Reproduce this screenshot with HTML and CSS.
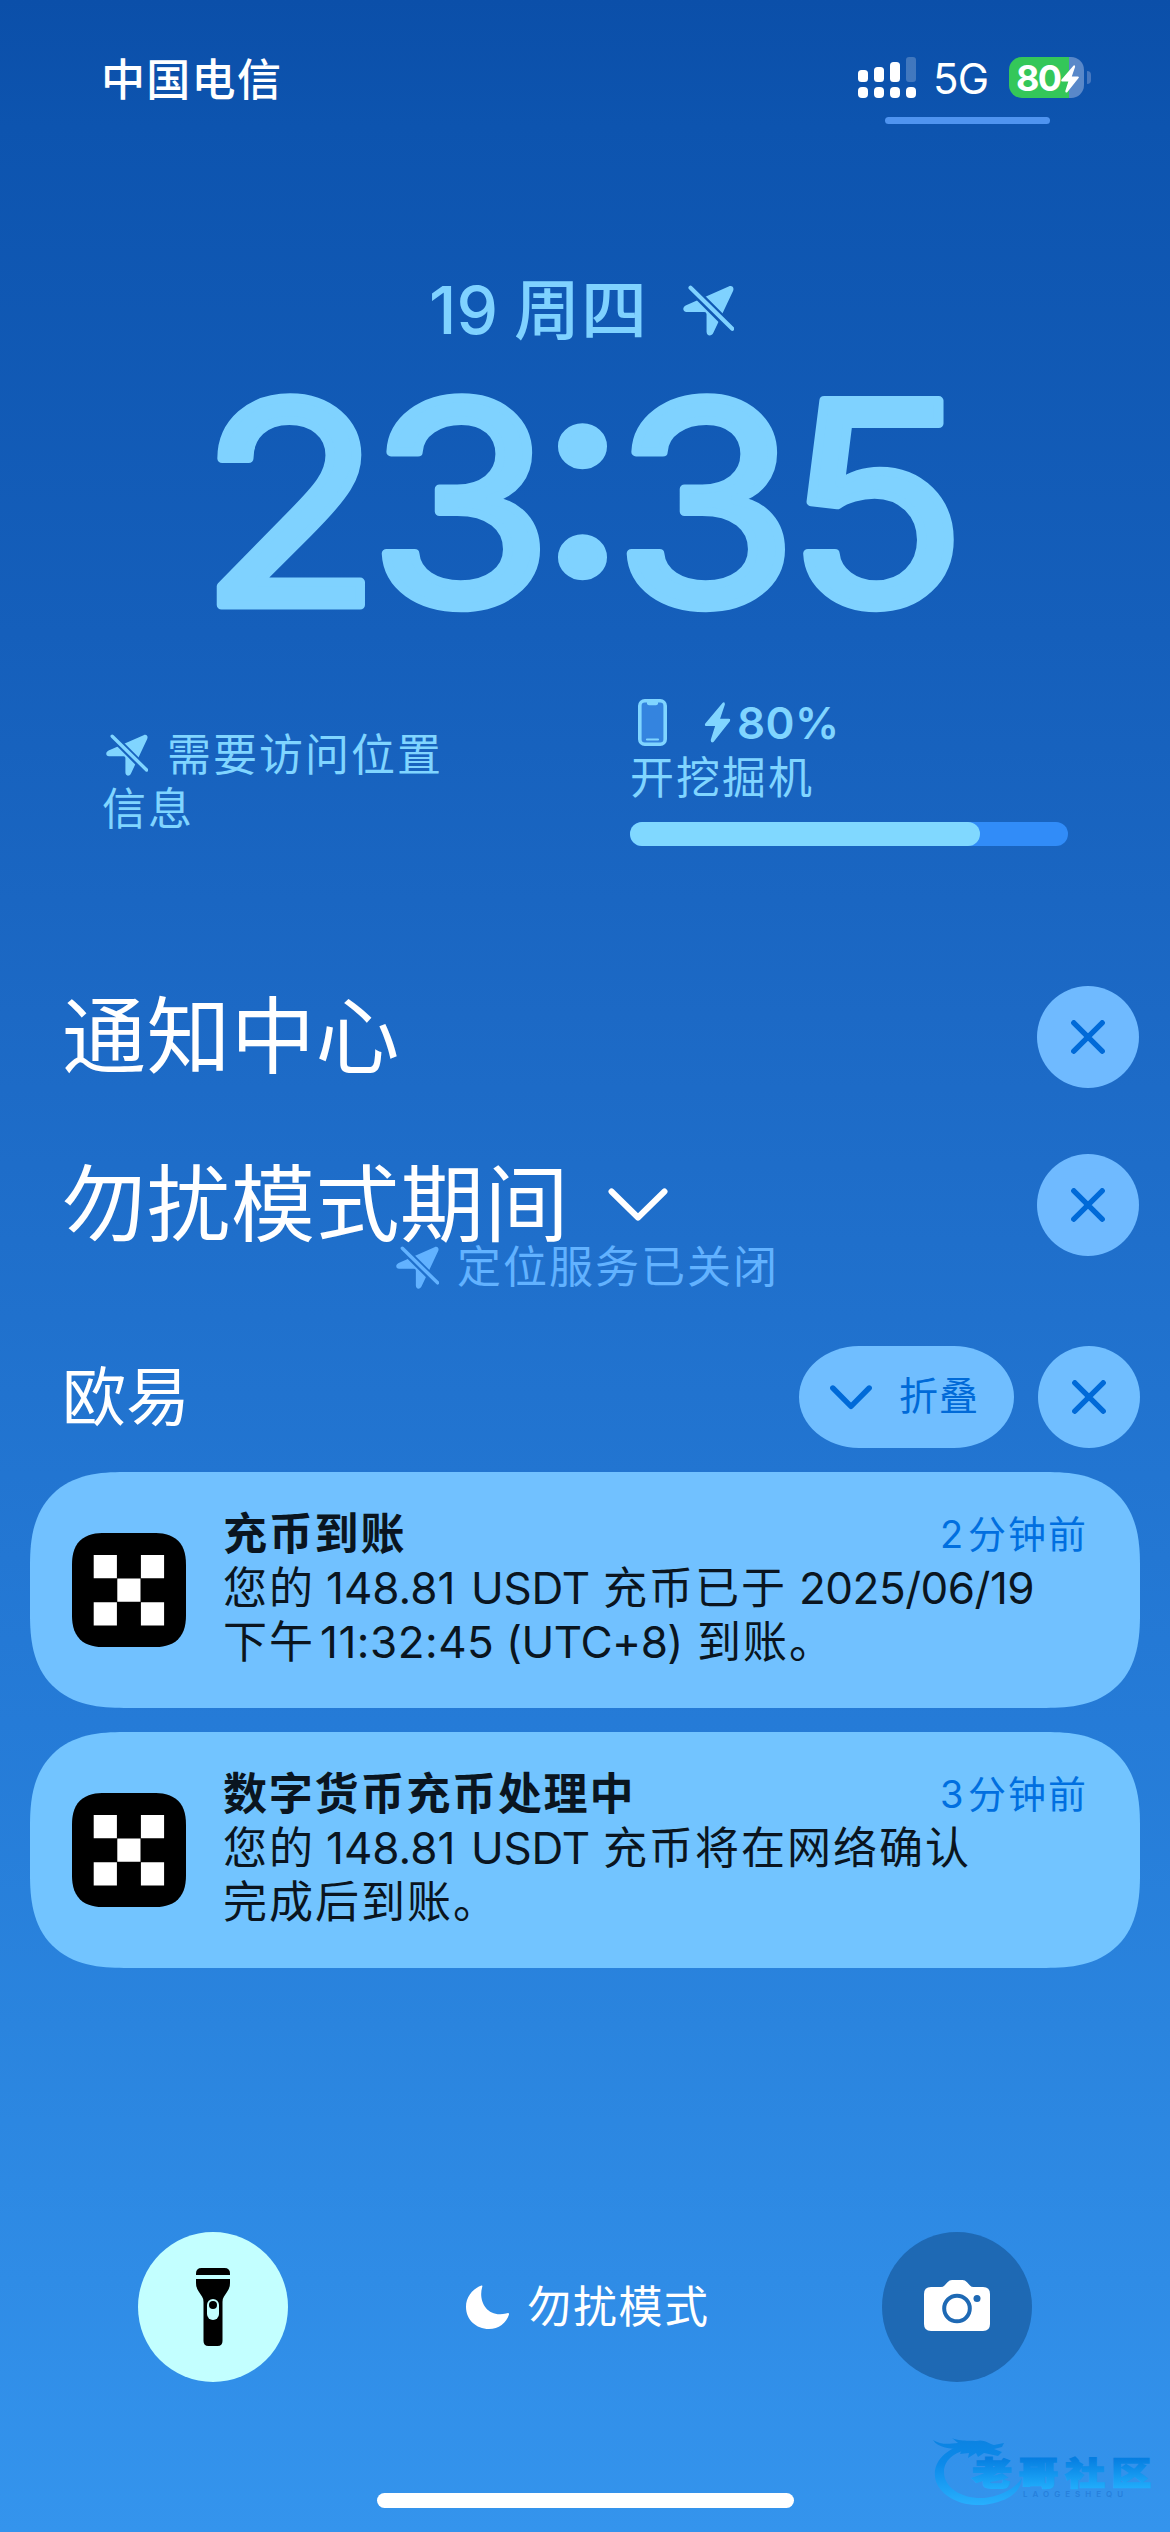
FILE: index.html
```html
<!DOCTYPE html>
<html lang="zh-CN">
<head>
<meta charset="utf-8">
<title>锁定屏幕</title>
<link rel="stylesheet" href="styles.css">
</head>
<body>
<svg class="defs" width="0" height="0">
  <defs>
    <mask id="slash-gap" maskUnits="userSpaceOnUse" x="0" y="0" width="42" height="42">
      <rect width="42" height="42" fill="#fff"/>
      <path d="M3 -1 L45 41" stroke="#000" stroke-width="7.4"/>
    </mask>
    <symbol id="location-slash" viewBox="0 0 42 42">
      <path mask="url(#slash-gap)" fill="currentColor" d="M37.6 1.2 L2.6 16.6 C-.8 18.2 -.4 22.2 3 22.2 H17.6 Q19.4 22.2 19.4 24 V38.6 C19.4 42.4 23.6 42.6 25 39.4 L41.2 5 C42.4 2 40.4 0 37.6 1.2Z"/>
      <path d="M6.2 2.2 L40.6 36" stroke="currentColor" stroke-width="3.4" stroke-linecap="round"/>
    </symbol>
    <symbol id="bolt" viewBox="0 0 26 41">
      <path fill="currentColor" d="M18.2 .8 L.8 21.4 Q-.6 24 1.8 24 H10.6 L6.2 38 Q6.2 41.4 9 40 L25.4 19.2 Q26.6 16.8 24.2 16.8 H15.6 L20.4 2.6 Q20.4 -.6 18.2 .8Z"/>
    </symbol>
    <symbol id="close" viewBox="0 0 34 34">
      <path d="M2.8 2.8 L31.2 31.2 M31.2 2.8 L2.8 31.2" stroke="currentColor" stroke-width="5.4" stroke-linecap="round"/>
    </symbol>
    <symbol id="okx" viewBox="0 0 114 114">
      <rect width="114" height="114" fill="#000"/>
      <path fill="#fff" d="M21.7 22h23.2v23.2h-23.2zM68.9 22h23.2v23.2h-23.2zM45.3 45.6h23.2v23.2h-23.2zM21.7 69.2h23.2v23.2h-23.2zM68.9 69.2h23.2v23.2h-23.2z"/>
    </symbol>
  </defs>
</svg>

<main class="screen">
  <header class="status">
    <span class="carrier">中国电信</span>
    <div class="status-right">
      <svg class="signal" width="58" height="41" viewBox="0 0 58 41" fill="#fff">
        <rect x="0" y="13" width="10" height="12" rx="3.5"/><rect x="16" y="10" width="10" height="15" rx="3.5"/>
        <rect x="32" y="5" width="10" height="20" rx="3.5"/><rect x="48" y="0" width="10" height="25" rx="3" opacity=".22"/>
        <rect x="0" y="30" width="10" height="11" rx="4"/><rect x="16" y="30" width="10" height="11" rx="4"/>
        <rect x="32" y="30" width="10" height="11" rx="4"/><rect x="48" y="30" width="10" height="11" rx="4"/>
      </svg>
      <span class="network">5G</span>
      <div class="battery"><span>80</span><svg class="battery-bolt" width="18" height="28" viewBox="0 0 26 41" preserveAspectRatio="none"><use href="#bolt"/></svg></div>
      <i class="battery-cap"></i>
    </div>
  </header>
  <div class="indicator"></div>

  <section class="date">
    <span class="date-day">19</span><span class="date-week">周四</span>
    <svg width="51" height="51"><use href="#location-slash"/></svg>
  </section>
  <svg class="clock" width="780" height="240" viewBox="0 0 780 240">
    <text transform="scale(1.065 1)" x="-2.800 156.100 316.800 386.100 547.300" y="221 221 190 221 221">23:35</text>
  </svg>

  <section class="widgets">
    <div class="widget-location">
      <svg width="42" height="42"><use href="#location-slash"/></svg>需要访问位置<br>信息
    </div>
    <div class="widget-battery">
      <div class="device">
        <svg class="phone" width="29" height="47" viewBox="0 0 29 47">
          <rect x="1.8" y="1.8" width="25.4" height="43.4" rx="5" fill="#3484df" stroke="#80d5ff" stroke-width="3.6"/>
          <path d="M9 2h11v2.2q0 2-2 2h-7q-2 0-2-2z" fill="#80d5ff"/>
          <path d="M9 40.5h11" stroke="#80d5ff" stroke-width="2.2" stroke-linecap="round"/>
        </svg>
        <svg class="device-bolt" width="27" height="41" viewBox="0 0 26 41"><use href="#bolt"/></svg>
        <span class="percent">80%</span>
      </div>
      <div class="device-name">开挖掘机</div>
      <div class="meter"><div class="meter-fill" style="width:80%"></div></div>
    </div>
  </section>

  <section class="group-row">
    <h1>通知中心</h1>
    <button class="round"><svg width="34" height="34"><use href="#close"/></svg></button>
  </section>
  <section class="group-row second">
    <h1>勿扰模式期间</h1>
    <svg class="chevron" width="60" height="34" viewBox="0 0 60 34"><path d="M3.5 3.5 L30 29.5 L56.5 3.5" fill="none" stroke="#fff" stroke-width="6" stroke-linecap="round" stroke-linejoin="round"/></svg>
    <button class="round"><svg width="34" height="34"><use href="#close"/></svg></button>
    <div class="ghost"><svg width="43" height="43"><use href="#location-slash"/></svg><span>定位服务已关闭</span></div>
  </section>
  <section class="group-row app">
    <h2>欧易</h2>
    <button class="collapse">
      <svg width="42" height="25" viewBox="0 0 42 25"><path d="M2.8 3 L21 21.4 L39.2 3" fill="none" stroke="currentColor" stroke-width="5.4" stroke-linecap="round" stroke-linejoin="round"/></svg>
      <span>折叠</span>
    </button>
    <button class="round"><svg width="34" height="34"><use href="#close"/></svg></button>
  </section>

  <section class="cards">
    <article class="card">
      <svg class="app-icon" width="114" height="114"><use href="#okx"/></svg>
      <div class="card-body">
        <div class="card-head"><h3>充币到账</h3><time><span>2</span>分钟前</time></div>
        <p>您的<span class="seg amount">148.81</span><span class="seg unit">USDT</span><span class="seg">充币已于</span><span class="seg day">2025/06/19</span></p>
        <p>下午<span class="seg hour">11:32:45</span><span class="seg zone">(UTC+8)</span><span class="seg">到账。</span></p>
      </div>
    </article>
    <article class="card">
      <svg class="app-icon" width="114" height="114"><use href="#okx"/></svg>
      <div class="card-body">
        <div class="card-head"><h3>数字货币充币处理中</h3><time><span>3</span>分钟前</time></div>
        <p>您的<span class="seg amount">148.81</span><span class="seg unit">USDT</span><span class="seg">充币将在网络确认</span></p>
        <p>完成后到账。</p>
      </div>
    </article>
  </section>

  <footer class="dock">
    <div class="dock-button torch">
      <svg width="34" height="78" viewBox="0 0 34 78">
        <path d="M0 7V5.5Q0 0 5.5 0h23Q34 0 34 5.5V7z"/>
        <path d="M0 11H34V15Q34 20 31 24 L28 28.500Q26.500 30.500 26.500 34V73Q26.500 78 21.500 78h-9Q7.500 78 7.500 73V34Q7.500 30.500 6 28.500L3 24Q0 20 0 15z"/>
        <rect x="11" y="31" width="12" height="21" rx="6" fill="#c3ffff"/><circle cx="17" cy="37" r="4"/>
      </svg>
    </div>
    <div class="focus">
      <svg width="44" height="44" viewBox="0 0 44 44"><path fill="#fff" d="M15.500 .6Q16.800 0 16.200 2C12 16 21 33 40 28.500Q43.500 27.200 43 29.500C40.500 38 32.500 44 23 44C10 44 0 34.500 0 22C0 12.500 6 4 15.500 .6Z"/></svg>
      <span>勿扰模式</span>
    </div>
    <div class="dock-button camera">
      <svg width="66" height="51" viewBox="0 0 66 51">
        <path fill="#fff" d="M7 7H17Q19 7 20.500 5.400L23.500 2.200Q25.500 0 28 0H38.500Q41 0 43 2.200L46 5.400Q47.500 7 49.500 7H59Q66 7 66 14V44Q66 51 59 51H7Q0 51 0 44V14Q0 7 7 7Z"/>
        <circle cx="33" cy="28.500" r="12.800" fill="none" stroke="#1e69b4" stroke-width="4"/><circle cx="53" cy="18.600" r="3.500" fill="#1e69b4"/>
      </svg>
    </div>
  </footer>
  <div class="home-bar"></div>

  <svg class="community" width="224" height="74" viewBox="0 0 224 74">
    <defs><linearGradient id="wave" gradientUnits="userSpaceOnUse" x1="0" y1="4" x2="0" y2="72"><stop offset="0" stop-color="#0b83e2"/><stop offset=".35" stop-color="#0c8aea"/><stop offset="1" stop-color="#2ab2ff"/></linearGradient>
    <linearGradient id="ink" gradientUnits="userSpaceOnUse" x1="0" y1="-27" x2="0" y2="3"><stop offset="0" stop-color="#057de0"/><stop offset="1" stop-color="#20acfb"/></linearGradient></defs>
    <path fill="url(#wave)" d="M34 8C8 14 -2 32 5 48C14 66 42 74 66 66C80 62 88 55 90 42C82 54 68 60 52 62C30 63 12 52 12 36C12 24 22 16 38 13Z"/>
    <path fill="url(#wave)" d="M1 4C9 9 16 8 26 7L20 2C30 6 36 4 44 5C52 3 56 7 62 9L72 7L70 11L62 13L70 16L66 20L52 17L46 21L44 17L36 22L37 17L28 18L30 13C18 13 6 12 1 4Z"/>
    <text class="community-name" transform="translate(40 49) scale(1.25 1)" x="0 37 74.500 111.500" y="0" fill="url(#ink)">老哥社区</text>
    <text class="community-sub" x="91" y="61">LAOGESHEQU</text>
  </svg>
</main>
</body>
</html>
```
FILE: styles.css
```css
* { box-sizing: border-box; }
body { margin: 0; }
h1, h2, h3, p { margin: 0; font-weight: 400; }
svg { display: block; flex: none; }
button { border: 0; padding: 0; font: inherit; }
.defs { position: absolute; }

.screen {
  position: relative;
  width: 1170px;
  height: 2532px;
  overflow: hidden;
  display: flex;
  flex-direction: column;
  color: #fff;
  font-family: Inter, "Noto Sans CJK SC", sans-serif;
  background: linear-gradient(180deg, #0b4fa9 0%, #0d54af 5%, #155fbb 25%, #1c69c5 40%, #2173cf 55%, #257bd7 68%, #2a84de 80%, #2f8ce6 90%, #3494ed 100%);
}

/* status bar */
.status { display: flex; align-items: flex-start; justify-content: space-between; height: 117px; padding: 57px 79px 0 101px; }
.carrier { font-size: 44px; line-height: 46px; letter-spacing: 1.300px; font-weight: 500; }
.status-right { display: flex; align-items: flex-start; }
.network { width: 76px; margin-left: 17px; font-size: 42px; line-height: 44px; letter-spacing: -.800px; }
.battery { position: relative; display: flex; width: 75px; height: 41px; padding-left: 7px; border-radius: 13px; background: linear-gradient(90deg, #34c759 60px, #5988c9 60px); font-size: 36px; line-height: 43px; font-weight: 700; letter-spacing: -1.800px; }
.battery-bolt { position: absolute; left: 52px; top: 8px; }
.battery-cap { width: 4px; height: 13px; margin: 14px 0 0 3px; border-radius: 0 4px 4px 0; background: #4678c0; }
.indicator { width: 165px; height: 7px; margin-left: 885px; border-radius: 4px; background: #4f94f0; }

/* date and clock */
.date { display: flex; align-items: center; height: 80px; margin: 146px 0 0 429px; color: #7fd2ff; font-size: 66px; line-height: 80px; font-weight: 500; }
.date-day { width: 85px; }
.date-week { width: 169px; letter-spacing: 1px; }
.clock { margin: 34px 0 0 202px; overflow: visible; }
.clock text { font-size: 281px; font-weight: 400; fill: #7fd2ff; stroke: #7fd2ff; stroke-width: 9px; stroke-linejoin: round; }

/* widgets */
.widgets { display: flex; justify-content: space-between; height: 166px; margin-top: 66px; padding: 0 102px; color: #80d5ff; font-size: 44px; letter-spacing: 2px; }
.widget-location { padding-top: 38px; line-height: 54px; }
.widget-location svg { display: inline-block; margin: 0 19px 0 4px; vertical-align: -5px; }
.widget-battery { width: 438px; padding-top: 9px; }
.device { display: flex; align-items: center; height: 47px; padding-left: 8px; }
.device-bolt { margin-left: 37px; }
.percent { margin-left: 6px; font-size: 44px; font-weight: 600; letter-spacing: .400px; }
.device-name { height: 54px; margin: 5px 0 17px; line-height: 54px; }
.meter { height: 24px; border-radius: 12px; background: #318cf8; }
.meter-fill { height: 24px; border-radius: 12px; background: #80d8ff; }

/* group headings */
.group-row { position: relative; display: flex; align-items: center; height: 102px; margin-top: 130px; padding: 0 31px 0 62px; }
.group-row.second { margin-top: 66px; }
.group-row.app { margin-top: 90px; padding-right: 30px; }
h1 { font-size: 84px; line-height: 104px; letter-spacing: .500px; }
h2 { font-size: 64px; line-height: 102px; }
.chevron { margin-left: 39px; }
.round, .collapse { display: flex; align-items: center; height: 102px; color: #006ad8; background: #6fbaff; }
.round { justify-content: center; width: 102px; margin-left: auto; border-radius: 51px; }
.app .round { margin-left: 24px; background: #70beff; }
.collapse { width: 215px; margin-left: auto; padding-left: 31px; gap: 27px; border-radius: 60px / 51px; background: #70beff; font-size: 39px; letter-spacing: 1px; }
.collapse span { line-height: 50px; margin-bottom: 2px; }
.ghost { position: absolute; left: 396px; top: 86px; display: flex; align-items: center; gap: 18px; color: #62b2ff; font-size: 44px; line-height: 54px; letter-spacing: 2px; }

/* notifications */
.cards { display: flex; flex-direction: column; gap: 24px; margin-top: 24px; padding: 0 30px; }
.card { display: flex; align-items: center; height: 236px; padding: 0 52px 0 42px; border-radius: 76px; background: #71c1ff; color: #0a1520; }
.card + .card { background: #72c4ff; }
.app-icon { border-radius: 27px; }
@supports (corner-shape: superellipse(1.3)) {
  .card { border-radius: 94px; corner-shape: superellipse(1.35); }
  .app-icon { border-radius: 33px; corner-shape: superellipse(1.35); }
}
.card-body { flex: 1; margin-left: 37px; padding-bottom: 5px; font-size: 44px; line-height: 54px; letter-spacing: 2px; }
.card-head { display: flex; justify-content: space-between; }
h3 { font-size: 44px; font-weight: 700; letter-spacing: 1.800px; }
time { display: flex; color: #006fe0; font-size: 38px; letter-spacing: 2px; }
time span { width: 28px; }
p { display: flex; white-space: nowrap; }
.seg { display: block; }
.amount { width: 145px; margin-left: 11px; letter-spacing: 0; }
.unit { width: 132px; letter-spacing: -.200px; }
.day { margin-left: 12px; letter-spacing: -.500px; }
.hour { width: 186px; margin-left: 5px; letter-spacing: .500px; }
.zone { width: 191px; letter-spacing: -.500px; }

/* bottom controls */
.dock { display: flex; justify-content: space-between; align-items: center; height: 150px; margin-top: 264px; padding: 0 138px; }
.dock-button { display: flex; align-items: center; justify-content: center; width: 150px; height: 150px; border-radius: 50%; }
.torch { background: #c3ffff; }
.camera { background: #1e69b4; }
.camera svg { margin-bottom: 3px; }
.focus { display: flex; align-items: center; gap: 17px; padding-left: 6px; font-size: 44px; line-height: 54px; letter-spacing: 1.600px; }
.home-bar { width: 417px; height: 15px; margin: 111px auto 0; border-radius: 8px; background: #fff; }

.community { position: absolute; left: 932px; top: 2436px; }
.community-name { font-size: 32px; font-weight: 900; stroke: url(#ink); stroke-width: 1.500px; }
.community-sub { font-size: 8px; font-weight: 600; letter-spacing: 5px; fill: #2680dc; }
```
